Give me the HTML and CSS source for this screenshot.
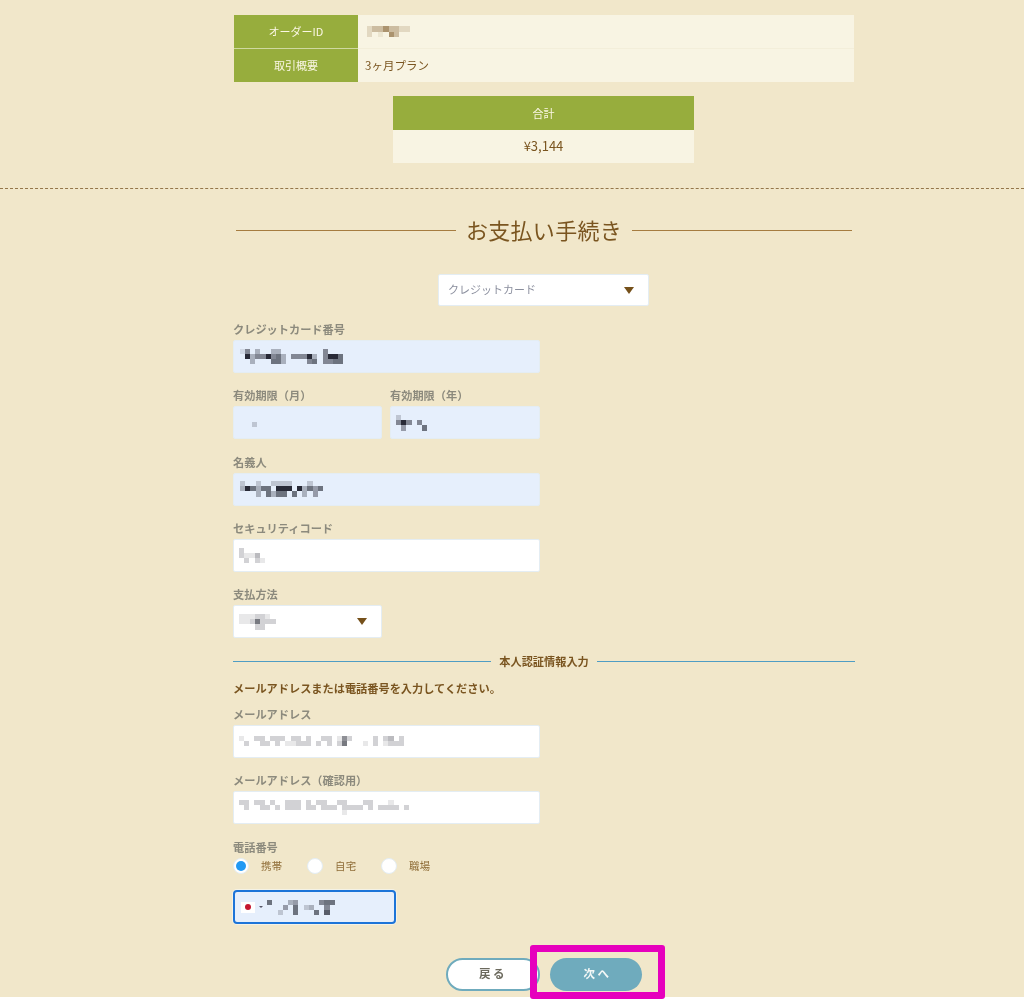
FILE: index.html
```html
<!DOCTYPE html>
<html lang="ja">
<head>
<meta charset="utf-8">
<title>お支払い手続き</title>
<link rel="stylesheet" href="styles.css">
</head>
<body>
<div class="page">
  <main class="main">
    <table class="info">
      <tr>
        <th>オーダーID</th>
        <td><svg class="mosaic brown" width="43" height="11" viewBox="0 0 8 2" preserveAspectRatio="none"><path class="m2" d="M0 .5h1M6 .5h2M0 1.5h1"/><path class="m4" d="M1 .5h2M4 .5h2M5 1.5h1"/><path class="m7" d="M3 .5h1M4 1.5h1"/><path class="m1" d="M2 1.5h1"/></svg></td>
      </tr>
      <tr>
        <th>取引概要</th>
        <td>3ヶ月プラン</td>
      </tr>
    </table>
    <table class="total">
      <tr><th>合計</th></tr>
      <tr><td>¥3,144</td></tr>
    </table>
  </main>

  <hr class="dash">

  <main class="main">
    <h1 class="title"><span>お支払い手続き</span></h1>

    <div class="method">
      <div class="select wide"><span class="placeholder">クレジットカード</span><i class="arrow"></i></div>
    </div>

    <div class="field">
      <label>クレジットカード番号</label>
      <div class="input filled">
        <svg class="mosaic" width="105" height="15.6" viewBox="0 0 20 3"><path class="m1" d="M0 .5h1"/><path class="m3" d="M3 .5h1M6 .5h2M2 1.5h1M8 1.5h1M14 1.5h1M2 2.5h1M8 2.5h1"/><path class="m5" d="M1 .5h1M16 .5h1M3 1.5h2M6 1.5h1M10 1.5h3M16 1.5h1M16 2.5h2M13 2.5h1"/><path class="m6" d="M7 1.5h1M6 2.5h2M14 2.5h1M18 2.5h2M19 1.5h1"/><path class="m9" d="M1 1.5h1M5 1.5h1M13 1.5h1M17 1.5h2"/></svg>
      </div>
    </div>

    <div class="field-row">
      <div class="field half">
        <label>有効期限（月）</label>
        <div class="input filled"><svg class="mosaic dot" width="5.2" height="5.2" viewBox="0 0 1 1"><path class="m2" d="M0 .5h1"/></svg></div>
      </div>
      <div class="field half">
        <label>有効期限（年）</label>
        <div class="input filled">
          <svg class="mosaic" width="31" height="15.6" viewBox="0 0 6 3"><path class="m2" d="M0 .5h1"/><path class="m5" d="M0 1.5h1M2 1.5h1M4 1.5h1"/><path class="m9" d="M1 1.5h1"/><path class="m4" d="M1 2.5h1"/><path class="m6" d="M5 2.5h1"/></svg>
        </div>
      </div>
    </div>

    <div class="field">
      <label>名義人</label>
      <div class="input filled">
        <svg class="mosaic" width="85" height="15.6" viewBox="0 0 16 3"><path class="m2" d="M0 .5h1M3 .5h1M6 .5h4M13 .5h1"/><path class="m3" d="M0 1.5h1M3 1.5h1M12 1.5h1M3 2.5h1M6 2.5h1M12 2.5h1"/><path class="m6" d="M2 1.5h1M4 1.5h2M13 1.5h1M15 1.5h1M5 2.5h1M7 2.5h2M10 2.5h1"/><path class="m9" d="M1 1.5h1M7 1.5h3M11 1.5h1"/><path class="m4" d="M14 1.5h1M14 2.5h1"/></svg>
      </div>
    </div>

    <div class="field">
      <label>セキュリティコード</label>
      <div class="input">
        <svg class="mosaic" width="26" height="15.6" viewBox="0 0 5 3"><path class="m2" d="M0 .5h1M0 1.5h1M1 2.5h1M3 2.5h1"/><path class="m3" d="M3 1.5h1"/><path class="m1" d="M1 1.5h2M4 2.5h1"/></svg>
      </div>
    </div>

    <div class="field half">
      <label>支払方法</label>
      <div class="select">
        <svg class="mosaic" width="37" height="15.6" viewBox="0 0 7 3"><path class="m1" d="M0 .5h3M5 .5h1M0 1.5h2"/><path class="m2" d="M3 .5h2M2 1.5h1M4 1.5h3M3 2.5h2"/><path class="m6" d="M3 1.5h1"/></svg>
        <i class="arrow"></i>
      </div>
    </div>

    <div class="sep"><span>本人認証情報入力</span></div>
    <p class="note">メールアドレスまたは電話番号を入力してください。</p>

    <div class="field">
      <label>メールアドレス</label>
      <div class="input">
        <svg class="mosaic" width="170" height="10.4" viewBox="0 0 33 2"><path class="m1" d="M0 .5h1M9 1.5h2M19 .5h1M24 1.5h1M28 1.5h1"/><path class="m2" d="M3 .5h2M6 .5h3M10 .5h2M13 .5h1M16 .5h2M21 .5h1M26 .5h1M28 .5h1M31 .5h1M1 1.5h1M4 1.5h2M7 1.5h1M11 1.5h3M15 1.5h1M17 1.5h1M19 1.5h1M26 1.5h1M29 1.5h3"/><path class="m3" d="M29 .5h1"/><path class="m5" d="M20 .5h1"/><path class="m6" d="M20 1.5h1"/></svg>
      </div>
    </div>

    <div class="field">
      <label>メールアドレス（確認用）</label>
      <div class="input">
        <svg class="mosaic" width="170" height="15.6" viewBox="0 0 33 3"><path class="m1" d="M29 .5h1M20 2.5h1"/><path class="m2" d="M0 .5h2M3 .5h2M6 .5h1M9 .5h3M13 .5h1M15 .5h2M19 .5h2M24 .5h2M27 1.5h1M1 1.5h1M4 1.5h2M7 1.5h1M9 1.5h3M13 1.5h2M16 1.5h3M20 1.5h4M25 1.5h1M28 1.5h3M32 1.5h1"/></svg>
      </div>
    </div>

    <div class="phone-label"><label>電話番号</label></div>
    <div class="radios">
      <div class="radio on"><i></i><span>携帯</span></div>
      <div class="radio"><i></i><span>自宅</span></div>
      <div class="radio"><i></i><span>職場</span></div>
    </div>

    <div class="tel">
      <span class="flag"><i></i></span>
      <i class="mini"></i>
      <svg class="mosaic" width="70" height="15.6" viewBox="0 0 13 3"><path class="m6" d="M0 .5h1M11 .5h1"/><path class="m3" d="M4 .5h1M8 1.5h1"/><path class="m4" d="M5 .5h1M3 1.5h1"/><path class="m6" d="M5 1.5h1M5 2.5h1M9 2.5h1M12 .5h1"/><path class="m2" d="M7 1.5h1M2 2.5h1"/><path class="m5" d="M10 .5h1M11 1.5h1"/><path class="m7" d="M11 2.5h1"/></svg>
    </div>

    <div class="actions">
      <button class="btn back" type="button"><span>戻る</span></button>
      <button class="btn next" type="button"><span>次へ</span></button>
    </div>
  </main>
</div>
<div class="highlight"></div>
</body>
</html>
```

FILE: styles.css
```css
* { box-sizing: border-box; }

html, body {
  margin: 0;
  background: #fff;
}

body {
  position: relative;
  height: 1001px;
  overflow: hidden;
  font-family: "Noto Sans CJK JP", "Noto Sans", sans-serif;
  color: #7a5520;
}

.page {
  height: 997px;
  padding-top: 15px;
  background: #f1e7ca;
  filter: blur(0.3px);
}

.main {
  width: 622px;
  margin-left: 233px;
}

.info,
.total {
  border-collapse: collapse;
  table-layout: fixed;
  font-size: 11px;
}

.info {
  width: 620px;
  margin-left: 1px;
}

.info th {
  width: 124px;
  height: 33.5px;
  padding: 0 0 2px;
  background: #97ad3d;
  color: #fbf7e4;
  font-weight: 400;
  border-bottom: 1px solid #cfd9a0;
}

.info tr:last-child th { border-bottom: 0; }

.info td {
  height: 33.5px;
  padding: 0 0 2px 7px;
  background: #f8f4e3;
  font-size: 11.5px;
  border-bottom: 1px solid #f3eeda;
}

.info tr:last-child td { border-bottom: 0; }

.total {
  width: 301px;
  margin: 14px 0 0 160px;
  text-align: center;
}

.total th {
  height: 33.5px;
  padding: 0;
  background: #97ad3d;
  color: #fbf7e4;
  font-weight: 400;
}

.total td {
  height: 33.5px;
  padding: 0 0 1px;
  background: #f8f4e3;
  font-size: 13px;
}

.dash {
  height: 0;
  margin: 25px 0 0;
  border: 0;
  border-top: 1px dashed #94764a;
}

.title {
  display: flex;
  align-items: center;
  gap: 10px;
  height: 34px;
  margin: 24px 0 0 3px;
  width: 616px;
  font-size: 22px;
  font-weight: 400;
  letter-spacing: 0.3px;
  line-height: 34px;
  white-space: nowrap;
  color: #7a5520;
}

.title span { padding-bottom: 3px; }

.title::before,
.title::after {
  content: "";
  flex: 1;
  height: 1px;
  background: #a67c40;
}

.method {
  display: flex;
  justify-content: center;
  width: 621px;
  margin: 27px 0 15px;
}

.select,
.input {
  display: flex;
  align-items: center;
  height: 33px;
  padding: 0 5px;
  background: #fff;
  border: 1px solid #e4edf3;
  border-radius: 2px;
}

.select {
  justify-content: space-between;
  padding-right: 14px;
}

.select.wide {
  width: 211px;
  height: 32px;
  padding-left: 9px;
  padding-right: 14px;
}

.placeholder {
  padding-bottom: 3px;
  font-size: 11px;
  color: #8b8f9e;
}

.arrow {
  display: block;
  width: 0;
  height: 0;
  border-left: 5px solid transparent;
  border-right: 5px solid transparent;
  border-top: 7px solid #75501a;
}

.field {
  width: 307px;
  margin-bottom: 14.33px;
}

.field label,
.phone-label label {
  display: block;
  height: 16px;
  margin-bottom: 3px;
  font-size: 11.2px;
  font-weight: 700;
  line-height: 17px;
  color: #8c8a7d;
  white-space: nowrap;
}

.filled {
  background: #e6effc;
}

.mosaic {
  display: block;
  flex: none;
  fill: none;
  stroke: #1d1f2c;
  stroke-width: 1;
  shape-rendering: crispEdges;
}

.mosaic.brown { stroke: #8a6a3c; margin-top: 2px; margin-left: 2px; }
.mosaic.dot { margin: 4px 0 0 13px; }

.m1 { stroke-opacity: 0.1; }
.m2 { stroke-opacity: 0.2; }
.m3 { stroke-opacity: 0.3; }
.m4 { stroke-opacity: 0.4; }
.m5 { stroke-opacity: 0.5; }
.m6 { stroke-opacity: 0.6; }
.m7 { stroke-opacity: 0.7; }
.m9 { stroke-opacity: 0.95; }

.field-row {
  display: flex;
  gap: 8px;
  width: 307px;
}

.field.half {
  width: 149px;
}

.field-row .field.half:last-child {
  width: 150px;
}

.sep {
  display: flex;
  align-items: center;
  gap: 8px;
  width: 622px;
  height: 16px;
  margin-top: 15.33px;
  font-size: 11.2px;
  font-weight: 700;
  white-space: nowrap;
}

.sep span { padding-bottom: 1px; }

.sep::before,
.sep::after {
  content: "";
  flex: 1;
  height: 1px;
  background: #4f9dc4;
}

.note {
  height: 16px;
  margin: 10px 0 10px;
  font-size: 11.2px;
  font-weight: 700;
  line-height: 16px;
}

.phone-label { padding-top: 1px; }

.radios {
  display: flex;
  width: 300px;
  height: 16px;
}

.radio {
  display: flex;
  align-items: center;
  gap: 12px;
  width: 74px;
  font-size: 10.4px;
  letter-spacing: 0.4px;
  color: #8f6d37;
}

.radio span { padding-bottom: 2px; }

.radio i {
  position: relative;
  display: block;
  flex: none;
  width: 16px;
  height: 16px;
  background: #fff;
  border: 1px solid #e4edf3;
  border-radius: 50%;
}

.radio.on i::after {
  content: "";
  position: absolute;
  inset: 2px;
  background: #2199f3;
  border-radius: 50%;
}

.tel {
  display: flex;
  align-items: center;
  width: 163px;
  height: 34px;
  margin-top: 16px;
  padding: 0 6px;
  background: #e6effc;
  border: 2px solid #1c74d8;
  border-radius: 4px;
  box-shadow: 0 0 0 1px #f4f2e6;
}

.flag {
  display: flex;
  align-items: center;
  justify-content: center;
  width: 14px;
  height: 11px;
  background: #fff;
}

.flag i {
  width: 6px;
  height: 6px;
  background: #c5162e;
  border-radius: 50%;
}

.mini {
  width: 0;
  height: 0;
  margin: 0 3px 0 4px;
  border-left: 2px solid transparent;
  border-right: 2px solid transparent;
  border-top: 2px solid #556;
}

.actions {
  display: flex;
  gap: 10px;
  margin: 34px 0 0 213px;
}

.btn {
  width: 94px;
  height: 33px;
  padding: 0;
  font-family: inherit;
  font-size: 11.5px;
  font-weight: 700;
  letter-spacing: 2.5px;
  border-radius: 17px;
}

.btn span {
  display: block;
  margin-top: -3px;
}

.back {
  background: #fff;
  border: 2px solid #6fabbd;
  color: #6c6a5e;
}

.next {
  width: 92px;
  padding-left: 3px;
  background: #6fabbd;
  border: 0;
  color: #f4f8f7;
}

.highlight {
  position: absolute;
  left: 530px;
  top: 945px;
  width: 135px;
  height: 54px;
  border: 7px solid #e600bd;
  border-radius: 3px;
}
```
